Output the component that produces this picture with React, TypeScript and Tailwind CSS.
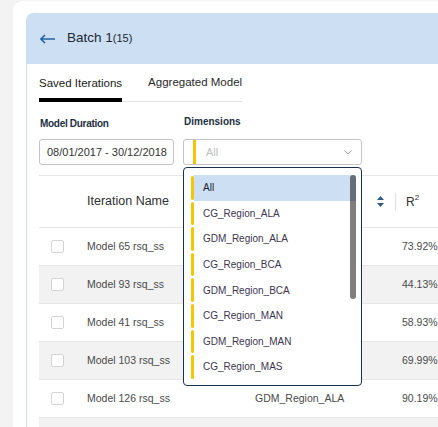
const rows = [
    { name: 'Model 65 rsq_ss', dim: '', r2: '73.92%' },
    { name: 'Model 93 rsq_ss', dim: '', r2: '44.13%' },
    { name: 'Model 41 rsq_ss', dim: '', r2: '58.93%' },
    { name: 'Model 103 rsq_ss', dim: '', r2: '69.99%' },
    { name: 'Model 126 rsq_ss', dim: 'GDM_Region_ALA', r2: '90.19%' },
    { name: '', dim: '', r2: '' }
]

const options = [
    'All',
    'CG_Region_ALA',
    'GDM_Region_ALA',
    'CG_Region_BCA',
    'GDM_Region_BCA',
    'CG_Region_MAN',
    'GDM_Region_MAN',
    'CG_Region_MAS'
]

function BackArrow() {
    return (
        <svg width="15" height="10" viewBox="0 0 15 10" className="text-[#2563a8]">
            <path d="M1 5h14M5 1L1 5l4 4" fill="none" stroke="currentColor" strokeWidth="1.6" />
        </svg>
    )
}

function Chevron() {
    return (
        <svg width="8" height="5" viewBox="0 0 8 5" className="text-[#9a9a9a]">
            <path d="M0.5 0.5L4 4l3.5-3.5" fill="none" stroke="currentColor" strokeWidth="1" />
        </svg>
    )
}

function SortIcon() {
    return (
        <svg width="7" height="11" viewBox="0 0 7 11" className="text-[#2d5a8a]">
            <path d="M3.5 0L7 4H0z M3.5 11L0 7h7z" fill="currentColor" />
        </svg>
    )
}

function DimensionsDropdown() {
    return (
        <div className="absolute left-0 top-[28px] z-10 w-[179px] h-[219px] rounded-[4px] border border-[#1b2f4e] bg-white pt-[7px] pl-[7px] pr-[5px] overflow-hidden">
            <div className="relative h-[205px] overflow-hidden">
                {options.map((opt, i) => (
                    <div key={opt} className="flex h-[25.6px] items-stretch">
                        <span className="my-[1px] w-[3px] rounded-full bg-[#f7c600]" />
                        <span
                            className={`flex flex-1 items-center pl-[9px] text-[10px] ${
                                i === 0 ? 'bg-[#cddff2] text-[#1a2230]' : 'text-[#3d3550]'
                            }`}
                        >
                            {opt}
                        </span>
                    </div>
                ))}
                <div className="absolute right-0 top-0 h-[124px] w-[6px] rounded-full bg-black/50" />
            </div>
        </div>
    )
}

export default function App() {
    return (
        <div className="h-[427px] w-[438px] overflow-hidden bg-[#f3f3f3] font-['Liberation_Sans',Arial,sans-serif]">
            <div className="ml-[13px] mt-[1px] h-[700px] w-[700px] rounded-tl-[9px] bg-white pl-[13px] pt-[12px]">
                <div className="h-full rounded-tl-[7px] border-l border-[#cadcf0]">
                    <header className="flex h-[51px] items-center gap-[12px] rounded-tl-[7px] bg-[#cddff2] pl-[13px]">
                        <BackArrow />
                        <h1 className="text-[13.5px] text-[#1c2733]">
                            Batch 1<span className="text-[11px]">(15)</span>
                        </h1>
                    </header>

                    <div className="pl-[12px]">
                        <div className="mt-[9px] flex w-fit items-end gap-[26px] border-b border-[#e3e3e3]">
                            <div className="-mb-px border-b-[4px] border-black pb-[6px] text-[11.5px] leading-[18px] text-[#1a1a1a]">
                                Saved Iterations
                            </div>
                            <div className="pb-[10px] text-[11.5px] leading-[18px] text-[#2a2a2a]">
                                Aggregated Model
                            </div>
                        </div>

                        <div className="mt-[14px] flex gap-[9px]">
                            <div className="flex flex-col">
                                <label className="pl-[1px] text-[10px] font-semibold leading-[16px] tracking-[-0.3px] text-[#22303f]">
                                    Model Duration
                                </label>
                                <div className="mt-[7px] flex h-[26px] w-[135px] items-center rounded-[3px] border border-[#c4c4c4] pl-[7px] text-[11px] text-[#333]">
                                    08/01/2017 - 30/12/2018
                                </div>
                            </div>
                            <div className="flex flex-col">
                                <label className="-mt-[2px] pl-[1px] text-[10px] font-semibold leading-[16px] text-[#22303f]">
                                    Dimensions
                                </label>
                                <div className="relative mt-[9px]">
                                    <div className="flex h-[26px] w-[179px] items-center rounded-[3px] border border-[#c4c4c4] pl-[9px] pr-[9px]">
                                        <span className="h-full w-[3px] bg-[#f7c600]" />
                                        <span className="ml-[10px] flex-1 text-[11px] text-[#bdbdbd]">All</span>
                                        <Chevron />
                                    </div>
                                    <DimensionsDropdown />
                                </div>
                            </div>
                        </div>

                        <div className="mt-[10px] border-t border-[#e6e6e6]">
                            <div className="grid h-[52px] grid-cols-[48px_168px_140px_80px] items-center border-b border-[#e6e6e6]">
                                <span />
                                <span className="text-[12.5px] text-[#2f2f2f]">Iteration Name</span>
                                <span className="flex justify-end pr-[11px]">
                                    <SortIcon />
                                </span>
                                <span className="flex h-[18px] items-center border-l border-[#e0e0e0] pl-[10px] text-[12px] text-[#2f2f2f]">
                                    R<sup className="text-[8px]">2</sup>
                                </span>
                            </div>
                            {rows.map((row, i) => (
                                <div
                                    key={i}
                                    className={`grid h-[38px] grid-cols-[48px_168px_140px_80px] items-center border-b border-[#e6e6e6] text-[10.5px] text-[#4a4a4a] ${
                                        i % 2 === 1 ? 'bg-[#f2f2f2]' : 'bg-white'
                                    }`}
                                >
                                    <span className="pl-[12px]">
                                        <span className="block h-[13px] w-[13px] rounded-[2px] border border-[#d4d4d4] bg-white" />
                                    </span>
                                    <span>{row.name}</span>
                                    <span>{row.dim}</span>
                                    <span className="pl-[7px]">{row.r2}</span>
                                </div>
                            ))}
                        </div>
                    </div>
                </div>
            </div>
        </div>
    )
}
